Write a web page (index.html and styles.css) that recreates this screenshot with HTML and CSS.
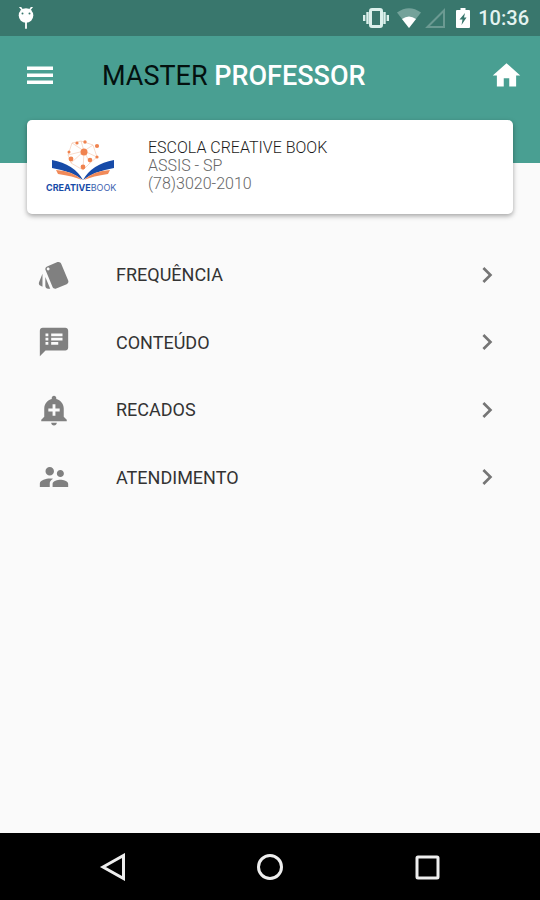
FILE: index.html
```html
<!DOCTYPE html>
<html lang="pt-BR">
<head>
<meta charset="utf-8">
<meta name="viewport" content="width=device-width, initial-scale=1">
<title>Master Professor</title>
<link rel="stylesheet" href="styles.css">
</head>
<body>
<div class="status">
  <svg class="status-bug" viewBox="0 0 16 22" aria-hidden="true"><path d="M2 0l2 2.500M14 0l-2 2.500M8 14v7" stroke="#fff" stroke-width="1.800" stroke-linecap="round"/><circle cx="8" cy="8.500" r="7.300" fill="#fff"/><circle cx="4.500" cy="6.500" r="1" fill="#39776d"/><circle cx="11.500" cy="6.500" r="1" fill="#39776d"/></svg>
  <div class="status-right">
    <svg class="vibrate" viewBox="0 0 26 20" aria-hidden="true"><rect x="7.500" y="1.500" width="11" height="17" rx="1.500" fill="none" stroke="#dcf0ec" stroke-width="3"/><path d="M4.500 4v12M21.500 4v12" stroke="#dcf0ec" stroke-width="2.400"/><path d="M1.200 7v6M24.800 7v6" stroke="#dcf0ec" stroke-width="2.400"/></svg>
    <svg class="wifi" viewBox="0 0 24 20" aria-hidden="true"><path d="M0 4.500Q12-4 24 4.500L12 20z" fill="#74a29a"/><path d="M5 11q7-5 14 0l-7 9z" fill="#fff"/></svg>
    <svg class="signal" viewBox="0 0 20 20" aria-hidden="true"><path d="M2.500 19L19 2.500V19z" fill="none" stroke="#6b9a92" stroke-width="2"/></svg>
    <svg class="battery" viewBox="0 0 14 20" aria-hidden="true"><path d="M4.500 0h5v2H13q1 0 1 1v16q0 1-1 1H1q-1 0-1-1V3q0-1 1-1h3.500z" fill="#fff"/><path d="M9 5L3.500 11.500H6.500L5.500 17L10.500 9.500H8z" fill="#39776d"/></svg>
    <span class="clock">10:36</span>
  </div>
</div>
<header class="appbar">
  <button class="icon-button" type="button" aria-label="Menu"><svg class="menu-icon" viewBox="0 0 36 36"><path d="M5 9.500h26v3.500H5zM5 16.500h26v3.500H5zM5 23.500h26v3.500H5z"/></svg></button>
  <h1 class="title">MASTER <strong>PROFESSOR</strong></h1>
  <button class="icon-button" type="button" aria-label="Home"><svg class="home-icon" viewBox="0 0 24 24"><path d="M10 20v-6h4v6h5v-8h3L12 3 2 12h3v8z"/></svg></button>
</header>
<main class="content">
  <section class="card">
    <svg class="logo" viewBox="0 0 74 54" role="img" aria-label="Creative Book">
      <g fill="none" stroke="#f3b899" stroke-width=".5"><path d="M26 4L35 2l12 4 4 12-7 6-7 7-12-7-3-8z"/><path d="M38 12L26 4M38 12l-3-10M38 12l9-6M38 12l13 6M38 12l6 12M38 12l-1 19M38 12L25 24M38 12l-16 4"/></g>
      <g fill="#f0834f"><circle cx="38" cy="13" r="3.500"/><circle cx="31" cy="4" r="1.600"/><circle cx="39" cy="3" r="1.700"/><circle cx="51" cy="7" r="2.100"/><circle cx="23" cy="13" r="1.500"/><circle cx="51" cy="18" r="1.600"/><circle cx="25" cy="20" r="2.400"/><circle cx="44" cy="21" r="2.300"/><circle cx="37" cy="28" r="2.400"/></g>
      <path d="M6 21Q28 25 37 41Q25 32 6 29zM68 21Q46 25 37 41Q49 32 68 29z" fill="#174ba8"/>
      <path d="M10 31Q27 32 36 41Q27 37 12 35zM64 31Q47 32 38 41Q47 37 62 35z" fill="#f18a59"/>
      <text x="0" y="52" class="logo-text"><tspan class="logo-strong">CREATIVE</tspan><tspan>BOOK</tspan></text>
    </svg>
    <div class="school">
      <h2 class="school-name">ESCOLA CREATIVE BOOK</h2>
      <p class="school-line">ASSIS - SP</p>
      <p class="school-line">(78)3020-2010</p>
    </div>
  </section>
  <nav class="list">
    <a class="row" href="#frequencia"><svg class="row-icon" viewBox="0 0 24 24"><path d="M2.530 19.650l1.340.560v-9.030l-2.430 5.860c-.410 1.020.080 2.190 1.090 2.610zm19.500-3.700L17.070 3.980c-.310-.750-1.040-1.210-1.810-1.230-.260 0-.530.040-.790.150L7.100 5.950c-.750.310-1.210 1.030-1.230 1.800-.010.270.040.540.150.800l4.960 11.970c.310.760 1.050 1.220 1.830 1.230.260 0 .520-.050.770-.150l7.360-3.050c1.020-.420 1.510-1.590 1.090-2.600zM7.880 8.750c-.550 0-1-.450-1-1s.450-1 1-1 1 .450 1 1-.450 1-1 1zm-2 11c0 1.100.900 2 2 2h1.450l-3.450-8.340v6.340z"/></svg><span class="row-label">FREQUÊNCIA</span><svg class="chevron" viewBox="0 0 24 24"><path d="M10 6L8.590 7.410 13.170 12l-4.580 4.590L10 18l6-6z"/></svg></a>
    <a class="row" href="#conteudo"><svg class="row-icon" viewBox="0 0 24 24"><path d="M20 2H4c-1.100 0-1.990.900-1.990 2L2 22l4-4h14c1.100 0 2-.900 2-2V4c0-1.100-.900-2-2-2zM8 14H6v-2h2v2zm0-3H6V9h2v2zm0-3H6V6h2v2zm7 6h-5v-2h5v2zm3-3h-8V9h8v2zm0-3h-8V6h8v2z"/></svg><span class="row-label">CONTEÚDO</span><svg class="chevron" viewBox="0 0 24 24"><path d="M10 6L8.590 7.410 13.170 12l-4.580 4.590L10 18l6-6z"/></svg></a>
    <a class="row" href="#recados"><svg class="row-icon" viewBox="0 0 24 24"><path d="M10.010 21.010c0 1.100.890 1.990 1.990 1.990s1.990-.890 1.990-1.990h-3.980zm8.870-4.190V11c0-3.250-2.250-5.970-5.290-6.690v-.720C13.590 2.710 12.880 2 12 2s-1.590.710-1.590 1.590v.720C7.370 5.030 5.120 7.750 5.120 11v5.820L3 18.940V20h18v-1.060l-2.120-2.120zM16 13.010h-3v3h-2v-3H8V11h3V8h2v3h3v2.010z"/></svg><span class="row-label">RECADOS</span><svg class="chevron" viewBox="0 0 24 24"><path d="M10 6L8.590 7.410 13.170 12l-4.580 4.590L10 18l6-6z"/></svg></a>
    <a class="row" href="#atendimento"><svg class="row-icon" viewBox="0 0 24 24"><path d="M16.500 12c1.380 0 2.490-1.120 2.490-2.500S17.880 7 16.500 7C15.120 7 14 8.120 14 9.500s1.120 2.500 2.500 2.500zM9 11c1.660 0 2.990-1.340 2.990-3S10.660 5 9 5C7.340 5 6 6.340 6 8s1.340 3 3 3zm7.500 3c-1.830 0-5.500.920-5.500 2.750V19h11v-2.250c0-1.830-3.670-2.750-5.500-2.750zM9 13c-2.330 0-7 1.170-7 3.500V19h7v-2.250c0-.850.330-2.340 2.370-3.470C10.500 13.100 9.660 13 9 13z"/></svg><span class="row-label">ATENDIMENTO</span><svg class="chevron" viewBox="0 0 24 24"><path d="M10 6L8.590 7.410 13.170 12l-4.580 4.590L10 18l6-6z"/></svg></a>
  </nav>
</main>
<footer class="navbar">
  <button class="nav-button" type="button" aria-label="Back"><svg class="nav-icon" viewBox="0 0 28 28"><path d="M4 14L24.500 2.500v23z"/></svg></button>
  <button class="nav-button" type="button" aria-label="Start"><svg class="nav-icon" viewBox="0 0 28 28"><circle cx="14" cy="14" r="11.500"/></svg></button>
  <button class="nav-button" type="button" aria-label="Recent apps"><svg class="nav-icon" viewBox="0 0 28 28"><rect x="4" y="4" width="21" height="21" rx="1"/></svg></button>
</footer>
</body>
</html>
```
FILE: styles.css
```css
* {
  box-sizing: border-box;
}

body {
  margin: 0;
  min-height: 100vh;
  display: flex;
  flex-direction: column;
  background: #fafafa;
  color: #212121;
  font-family: Roboto, "Liberation Sans", sans-serif;
}

button {
  border: 0;
  padding: 0;
  background: none;
}

svg {
  display: block;
  flex: none;
}

h1,
h2,
p {
  margin: 0;
}

.status {
  height: 36px;
  padding: 0 11px 0 18px;
  display: flex;
  align-items: center;
  justify-content: space-between;
  background: #39776d;
}

.status-bug {
  width: 16px;
  height: 22px;
}

.status-right {
  display: flex;
  align-items: center;
  gap: 8px;
}

.vibrate {
  width: 26px;
  height: 20px;
}

.wifi {
  width: 24px;
  height: 20px;
}

.signal {
  width: 20px;
  height: 20px;
  margin-left: -4px;
}

.battery {
  width: 14px;
  height: 20px;
  margin-left: 3px;
}

.clock {
  color: #e4f3f0;
  font-size: 20px;
  line-height: 38px;
  font-weight: 500;
}

.appbar {
  height: 127px;
  padding: 19px 17px 0 22px;
  display: flex;
  align-items: flex-start;
  background: #499f92;
}

.icon-button {
  height: 40px;
  display: flex;
  align-items: center;
  fill: #fff;
}

.menu-icon {
  width: 36px;
  height: 36px;
}

.home-icon {
  width: 33px;
  height: 33px;
}

.title {
  flex: 1;
  margin-left: 44px;
  color: #04110f;
  font-size: 27px;
  line-height: 42px;
  font-weight: 400;
}

.title strong {
  color: #fff;
  font-weight: 500;
}

.content {
  flex: 1;
  padding: 0 27px;
}

.card {
  position: relative;
  height: 94px;
  margin-top: -43px;
  padding: 19px;
  display: flex;
  gap: 28px;
  border-radius: 5px;
  background: #fff;
  box-shadow: 0 2px 5px rgba(0, 0, 0, 0.35);
}

.logo {
  width: 74px;
  height: 54px;
}

.logo-text {
  font-family: Inter, sans-serif;
  font-size: 9px;
  fill: #3d63b0;
}

.logo-strong {
  font-weight: 700;
  fill: #174ba8;
}

.school-name {
  font-size: 16px;
  line-height: 18px;
  font-weight: 300;
  color: #1c1c1c;
}

.school-line {
  font-size: 16px;
  line-height: 18px;
  font-weight: 300;
  color: #666;
}

.list {
  height: 270px;
  margin-top: 27px;
  display: grid;
  grid-auto-rows: 1fr;
}

.row {
  padding: 0 10px;
  display: flex;
  align-items: center;
  color: #333;
  text-decoration: none;
}

.row-icon {
  width: 34px;
  height: 34px;
  fill: #808080;
}

.row-label {
  flex: 1;
  margin-left: 45px;
  font-size: 18px;
  font-weight: 400;
}

.chevron {
  width: 32px;
  height: 32px;
  fill: #757575;
}

.navbar {
  height: 67px;
  padding: 0 34px;
  display: grid;
  grid-template-columns: repeat(3, 1fr);
  background: #000;
}

.nav-button {
  display: flex;
  align-items: center;
  justify-content: center;
}

.nav-icon {
  width: 28px;
  height: 28px;
  fill: none;
  stroke: #eee;
  stroke-width: 3;
}
```
